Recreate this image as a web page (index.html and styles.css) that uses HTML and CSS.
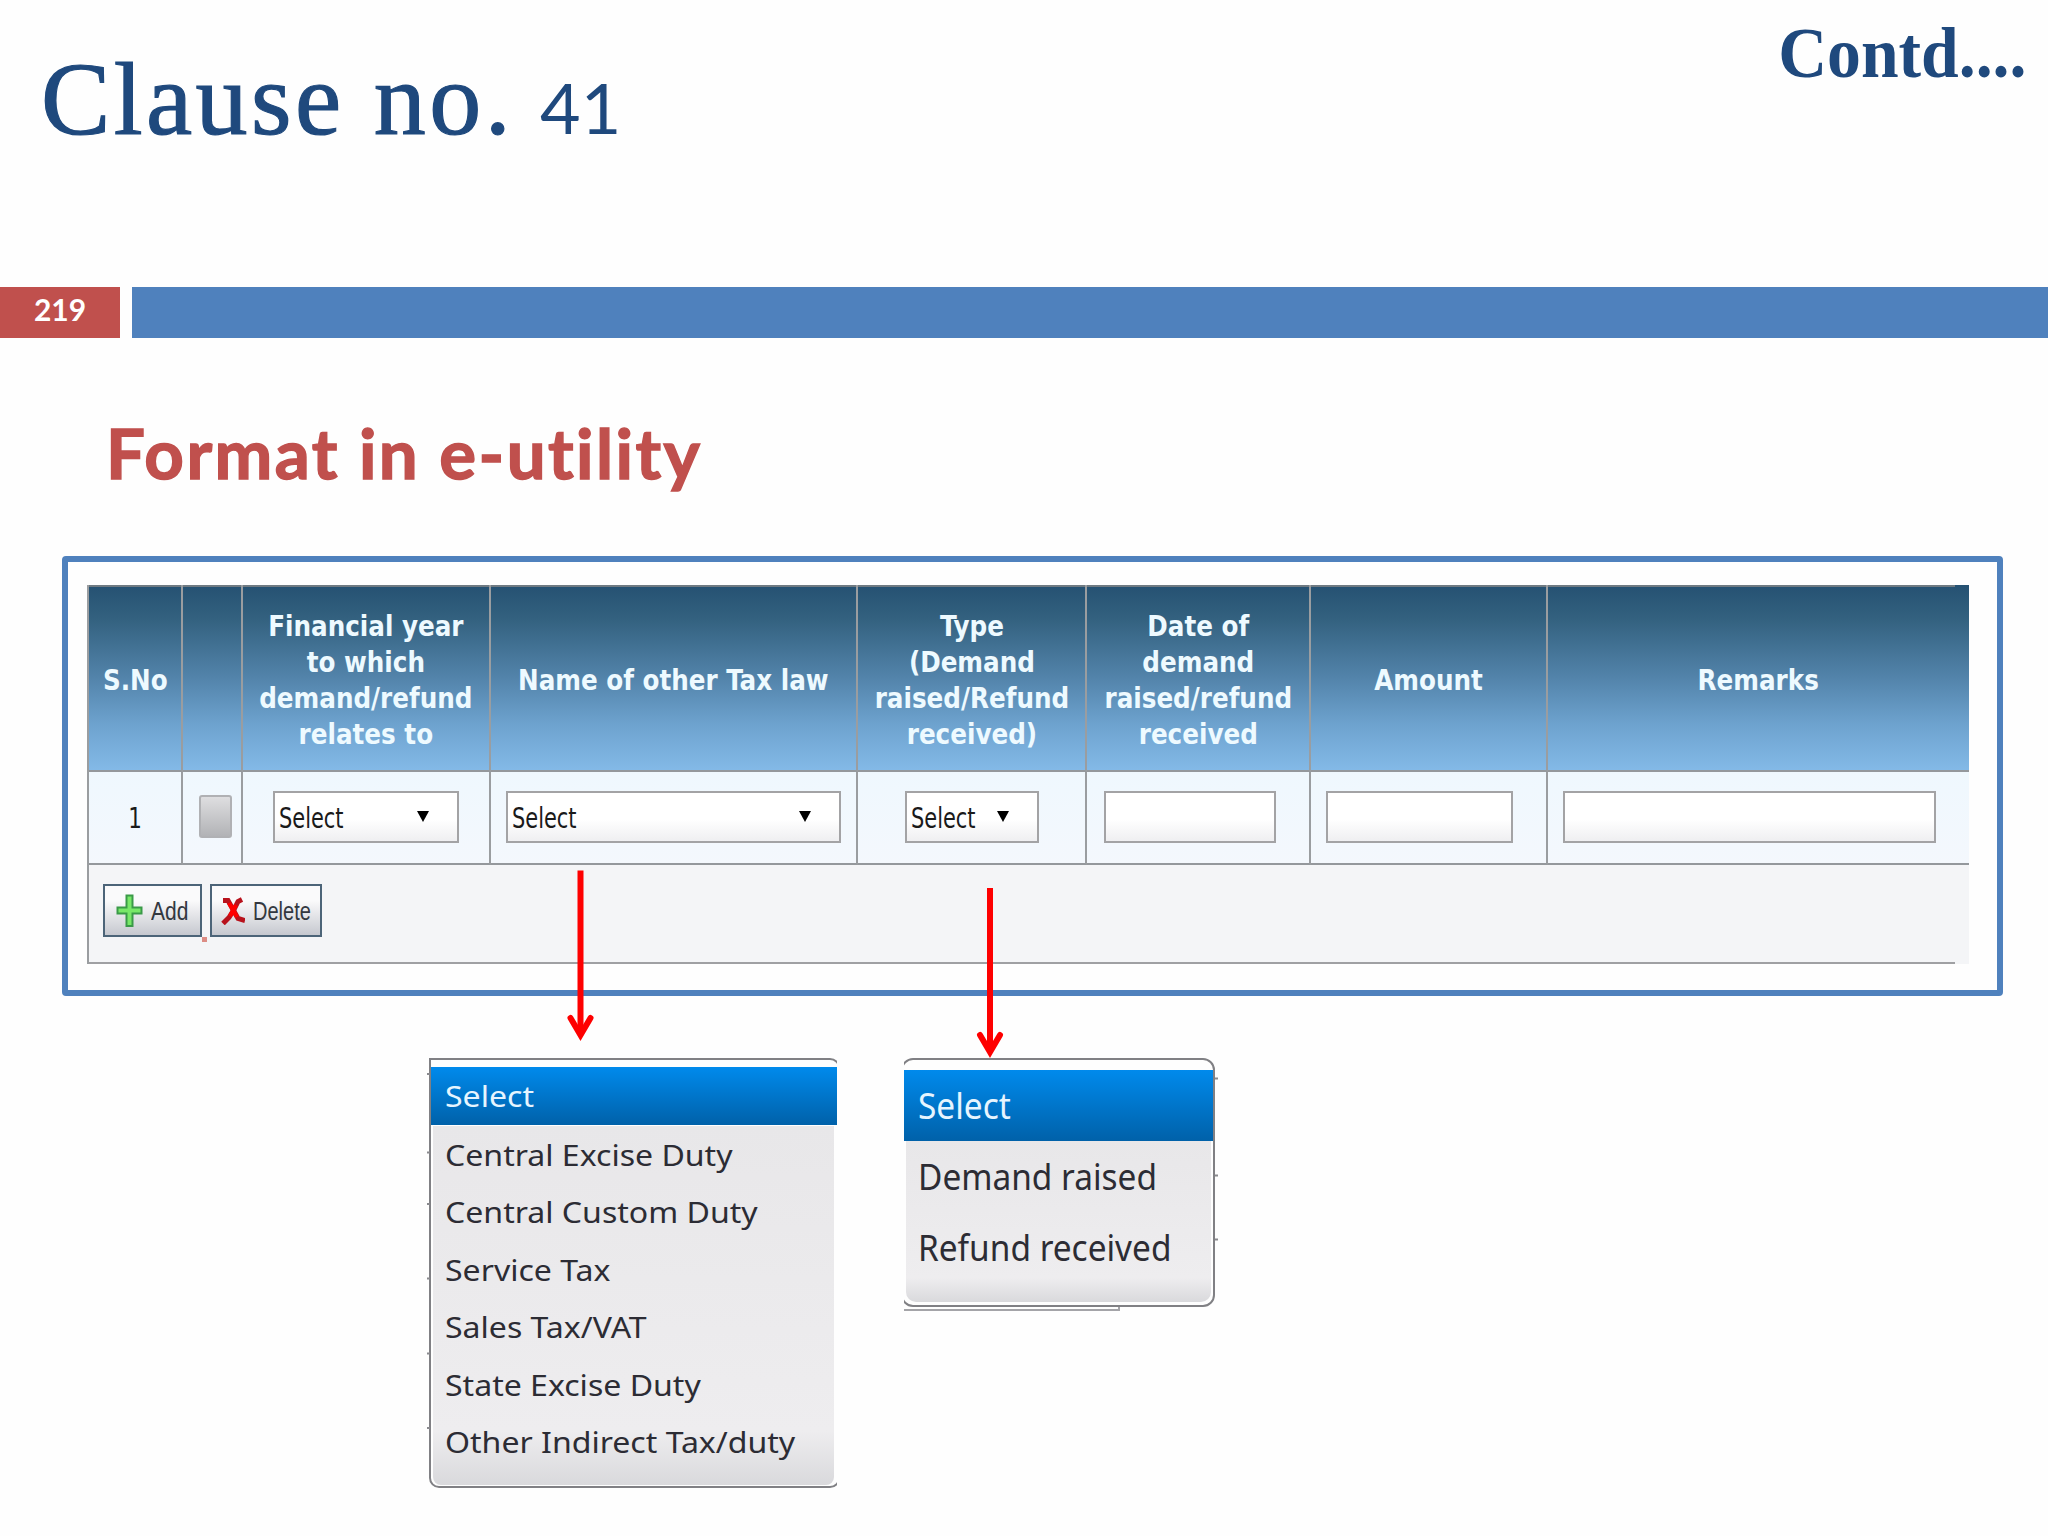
FILE: index.html
```html
<!DOCTYPE html>
<html lang="en">
<head>
  <meta charset="UTF-8">
  <meta name="viewport" content="width=device-width, initial-scale=1.0">
  <title>Clause no. 41</title>
  <link rel="stylesheet" href="styles.css">
</head>
<body>
  <div class="slide">
    <header class="header">
      <h1><span class="title">Clause no.</span><span class="number">41</span></h1>
      <span class="contd">Contd....</span>
    </header>

    <div class="band">
      <div class="page-no">219</div>
      <div class="band-fill"></div>
    </div>

    <h2>Format in e-utility</h2>

    <div class="frame">
      <div class="table">
        <div class="row head">
          <div class="cell"><span>S.No</span></div>
          <div class="cell"></div>
          <div class="cell"><span>Financial year<br>to which<br>demand/refund<br>relates to</span></div>
          <div class="cell"><span>Name of other Tax law</span></div>
          <div class="cell"><span>Type<br>(Demand<br>raised/Refund<br>received)</span></div>
          <div class="cell"><span>Date of<br>demand<br>raised/refund<br>received</span></div>
          <div class="cell"><span>Amount</span></div>
          <div class="cell"><span>Remarks</span></div>
        </div>
        <div class="row entry">
          <div class="cell sno"><span>1</span></div>
          <div class="cell tick"><div class="checkbox"></div></div>
          <div class="cell year"><div class="select"><span>Select</span><i class="caret"></i></div></div>
          <div class="cell law"><div class="select"><span>Select</span><i class="caret"></i></div></div>
          <div class="cell type"><div class="select"><span>Select</span><i class="caret"></i></div></div>
          <div class="cell date"><div class="input"></div></div>
          <div class="cell amount"><div class="input"></div></div>
          <div class="cell remarks"><div class="input"></div></div>
        </div>
        <div class="actions">
          <div class="button add">
            <svg width="27" height="34" viewBox="0 0 27 34">
              <path d="M10.500 1.500h6v12h9v6h-9v12.500h-6v-12.500h-9v-6h9z" fill="#78e868" stroke="#3a9a48" stroke-width="2"/>
            </svg>
            <span>Add</span>
          </div>
          <i class="dot"></i>
          <div class="button delete">
            <svg width="24" height="28" viewBox="0 0 24 28">
              <path d="M2 3.500h5l5 9 5 9 7 2" fill="none" stroke="#b8121c" stroke-width="5"/>
              <path d="M21 2.500l-4 2-4 8-5 8-6 6" fill="none" stroke="#b8121c" stroke-width="5"/>
              <path d="M8 6l8 14M15 8l-6 11" stroke="#f00" stroke-width="4"/>
            </svg>
            <span>Delete</span>
          </div>
        </div>
      </div>
    </div>

    <div class="menus">
      <div class="menu law-menu">
        <div class="menu-box">
          <div class="active"><span>Select</span></div>
          <ul>
            <li><span>Central Excise Duty</span></li>
            <li><span>Central Custom Duty</span></li>
            <li><span>Service Tax</span></li>
            <li><span>Sales Tax/VAT</span></li>
            <li><span>State Excise Duty</span></li>
            <li><span>Other Indirect Tax/duty</span></li>
          </ul>
        </div>
      </div>
      <div class="menu type-menu">
        <div class="menu-box">
          <div class="active"><span>Select</span></div>
          <ul>
            <li><span>Demand raised</span></li>
            <li><span>Refund received</span></li>
          </ul>
        </div>
        <div class="under-line"></div>
      </div>
    </div>

    <!-- arrows from the selects down to their menus, and the row ticks beside the menus -->
    <svg class="arrows" width="2048" height="1536" viewBox="0 0 2048 1536">
      <g fill="none" stroke="#fe0000" stroke-width="6">
        <path d="M580.500 870.500V1034M990 888V1052"/>
        <path d="M570.500 1018l10 17 10-17M980 1035l10 17 10-17" stroke-linecap="round"/>
      </g>
      <path d="M427 1074h3M427 1152.500h3M427 1204h3M427 1278.500h3M427 1353.500h3M427 1428h3M1215 1078.500h3M1215 1175.500h3M1215 1239.500h3" stroke="#8a8a8e" stroke-width="2"/>
    </svg>
  </div>
</body>
</html>
```
FILE: styles.css
```css
* {
  box-sizing: border-box;
}

body {
  margin: 0;
  background-color: #fefefe;
}

.slide {
  position: relative;
  width: 2048px;
  height: 1536px;
  overflow: hidden;
}

.header {
  display: flex;
  justify-content: space-between;
  height: 287px;
  color: #1f497d;
  font-family: "Liberation Serif", serif;
}

h1 {
  margin: 0;
  padding: 34px 0 0 41px;
  font-weight: normal;
  font-size: 104px;
  line-height: 130px;
}

.title {
  letter-spacing: 3.4px;
  -webkit-text-stroke: 1.2px #1f497d;
}

.number {
  margin-left: 26px;
  font-family: Lato, sans-serif;
  font-size: 70px;
}

.contd {
  padding: 17px 23px 0 0;
  font-size: 72px;
  font-weight: bold;
  line-height: 72px;
  transform: scaleX(0.94);
  transform-origin: right;
}

.band {
  display: flex;
  gap: 12px;
  height: 51px;
}

.page-no {
  width: 120px;
  background-color: #c0504d;
  color: white;
  font: bold 30px/44px Lato, sans-serif;
  text-align: center;
}

.band-fill {
  flex: 1;
  background-color: #4f81bd;
}

h2 {
  margin: 0;
  padding: 73px 0 0 106px;
  height: 218px;
  color: #c0504d;
  font: bold 69px/84px Lato, sans-serif;
  letter-spacing: 2.4px;
  -webkit-text-stroke: 1.4px #c0504d;
}

.frame {
  width: 1941px;
  height: 440px;
  margin-left: 62px;
  padding: 23px 0 0 19px;
  border: 6px solid #4f81bd;
  border-radius: 4px;
}

.table {
  width: 1882px;
  height: 379px;
  border-left: 2px solid #9a9da0;
  background: linear-gradient(#9fa0a3, #9fa0a3) 0 100% / 1866px 2px no-repeat #f4f5f7;
}

.row {
  display: grid;
  grid-template-columns: 94px 60px 248px 367px 229px 224px 237px 421px;
}

.cell {
  display: flex;
  align-items: center;
  border-right: 2px solid #9a9da0;
  border-bottom: 2px solid #94989c;
}

.cell:last-child {
  border-right: none;
}

.head {
  height: 187px;
  background:
    linear-gradient(#6f7a82, #6f7a82) 0 0 / 1866px 2px no-repeat,
    linear-gradient(#255172, #33617f 18%, #5384ab 50%, #6ea3cf 75%, #84bae8);
  color: #eefaff;
  font: bold 29px/36px "DejaVu Sans Condensed", "DejaVu Sans", sans-serif;
}

.head .cell {
  justify-content: center;
  padding-top: 5px;
  text-align: center;
}

.head span {
  white-space: nowrap;
  transform: scaleX(0.945);
}

.entry {
  height: 93px;
  background: linear-gradient(#eff8fe, #f4f8fd);
  color: #1a1a1a;
  font: 28px/36px "DejaVu Sans Condensed", "DejaVu Sans", sans-serif;
}

.entry .cell {
  padding-bottom: 2px;
}

.sno {
  justify-content: center;
}

.sno span {
  padding-top: 4px;
  transform: scaleX(0.85);
}

.tick {
  padding-left: 16px;
}

.checkbox {
  width: 33px;
  height: 43px;
  border: 2px solid #b0b1b4;
  border-radius: 3px;
  background: linear-gradient(#dedee0, #b2b3b6);
}

.select,
.input {
  height: 52px;
  border: 2px solid #a3a3a5;
  background: linear-gradient(#fff 55%, #efeff1);
}

.select {
  display: flex;
  align-items: center;
  justify-content: space-between;
  padding: 5px 28px 0 4px;
}

.select span {
  width: 65px;
  transform: scaleX(0.83);
  transform-origin: left;
}

.caret {
  margin-bottom: 5px;
  border: 6.5px solid transparent;
  border-top: 11px solid #000;
  border-bottom: none;
}

.year {
  padding-left: 30px;
}

.year .select {
  width: 186px;
}

.law {
  padding-left: 15px;
}

.law .select {
  width: 335px;
}

.type {
  padding-left: 47px;
}

.type .select {
  width: 134px;
}

.date {
  padding-left: 17px;
}

.date .input {
  width: 172px;
}

.amount {
  padding-left: 15px;
}

.amount .input {
  width: 187px;
}

.remarks {
  padding-left: 15px;
}

.remarks .input {
  width: 373px;
}

.actions {
  display: flex;
  padding: 19px 0 0 14px;
  color: #333840;
  font: 25px/30px "Liberation Sans", sans-serif;
}

.button {
  display: flex;
  align-items: center;
  height: 53px;
  border: 2px solid #4c6478;
  background: linear-gradient(#fafafb 30%, #c6c8cf);
}

.button span {
  transform-origin: left;
}

.add {
  width: 99px;
  padding-left: 11px;
  gap: 8px;
}

.add span {
  transform: scaleX(0.84);
}

.delete {
  width: 112px;
  margin-left: 3px;
  padding-left: 9px;
  gap: 8px;
}

.delete span {
  transform: scaleX(0.8);
}

.delete svg {
  flex: none;
}

.dot {
  width: 5px;
  height: 5px;
  margin-top: 53px;
  background-color: #dc8c84;
}

.menus {
  display: flex;
  align-items: flex-start;
  padding: 62px 0 0 429px;
}

.menu {
  overflow: hidden;
  font-kerning: none;
}

.menu-box {
  border: 2px solid #808084;
  background-color: #fefefe;
}

.menu span {
  display: inline-block;
  white-space: nowrap;
  transform-origin: left;
}

.menu ul {
  list-style: none;
  margin: 0;
  padding: 0;
  color: #2c2c34;
  background: linear-gradient(#e8e7e9, #eeedef 85%, #d9d9dc);
}

.active {
  background: linear-gradient(#008aec, #0061a9);
  color: #e6f5ff;
}

.law-menu {
  width: 408px;
  margin-right: 67px;
  font: 29px/57.4px "Noto Sans", sans-serif;
}

.law-menu .menu-box {
  width: 411px;
  height: 430px;
  padding-top: 7px;
  border-radius: 0 10px 10px 10px;
}

.law-menu .active {
  height: 58px;
  padding-left: 14px;
}

.law-menu ul {
  width: 401px;
  height: 359px;
  margin: 1px 0 0 2px;
  padding: 0 0 0 12px;
  border-radius: 0 0 8px 8px;
}

.law-menu li {
  height: 57.4px;
}

.law-menu li span {
  margin-top: -1px;
}

.law-menu span {
  transform: scaleX(1.105);
}

.type-menu {
  width: 311px;
  font: 36px/71px "Noto Sans", sans-serif;
}

.type-menu .menu-box {
  width: 314px;
  height: 249px;
  margin-left: -3px;
  padding-top: 10px;
  border-radius: 12px;
}

.type-menu .active {
  height: 71px;
  padding-left: 15px;
}

.type-menu ul {
  width: 305px;
  height: 161px;
  margin-left: 3px;
  padding-left: 12px;
  border-radius: 0 0 10px 10px;
}

.type-menu span {
  transform: scaleX(0.928);
}

.under-line {
  width: 216px;
  height: 4px;
  border: solid #a4a4a8;
  border-width: 0 2px 2px 0;
}

.arrows {
  position: absolute;
  top: 0;
  left: 0;
}
```
